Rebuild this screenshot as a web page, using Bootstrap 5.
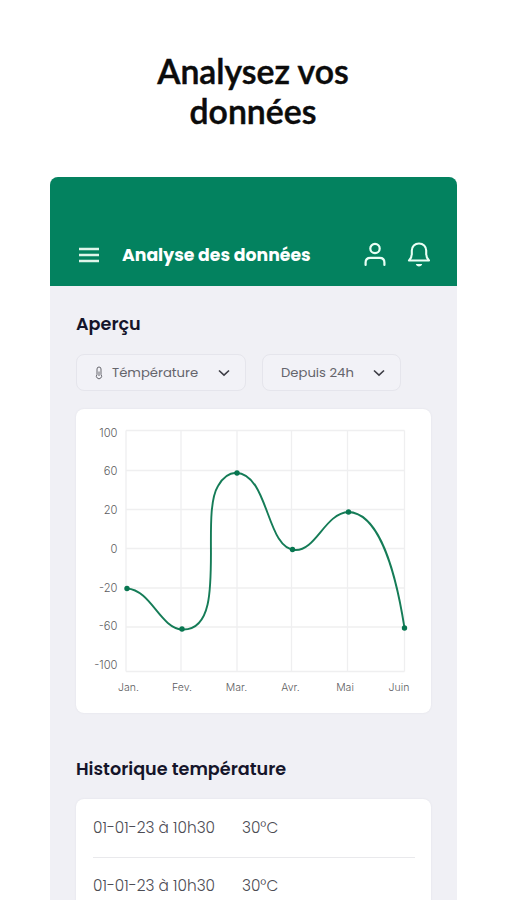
<!DOCTYPE html>
<html lang="fr">
<head>
<meta charset="utf-8">
<meta name="viewport" content="width=device-width, initial-scale=1">
<title>Analysez vos données</title>
<link href="https://cdn.jsdelivr.net/npm/bootstrap@5.3.0/dist/css/bootstrap.min.css" rel="stylesheet">
<style>
body{font-family:Poppins,Inter,"Liberation Sans",sans-serif;height:900px;overflow:hidden;background:#fff}
.headline{font:600 33.8px/40px Lato,sans-serif;-webkit-text-stroke:.5px #0b0b0b;color:#0b0b0b;height:177px;padding-top:51px}
.phone{width:407px;margin-left:50px;height:723px;background:#f0f0f5;border-radius:8px 8px 0 0;overflow:hidden}
.topbar{height:109px;background:#03825f;padding:0 24px 15px 28px}
.topbar-title{font-size:17.3px;line-height:32px;font-weight:700;margin-left:22px}
.content{padding:26px 26px 0}
.section-title{font-size:17.6px;line-height:24px;font-weight:600;color:#15152a}
.pickers{margin-top:18px}
.picker{height:37px;border:1px solid #e5e5ec;border-radius:8px;background:#f2f2f7;font-size:13.2px;color:#65656c}
.picker-a{width:170px;padding:0 15px 0 17px}
.picker-b{width:139px;padding:0 15px 0 18px}
.panel{border:0;border-radius:8px;box-shadow:0 0 2px #dedee6}
.chart-panel{margin-top:18px}
.chart{display:block}
.history-title{padding-top:44px}
.history{margin-top:18px;font-size:15.3px;font-weight:300;color:#4c4c54;padding:0 16px 0 17px;height:140px}
.entry{height:58px}
.entry+.entry{border-top:1px solid #e9e9ec}
.when{width:149px}
</style>
<script src="https://cdn.jsdelivr.net/npm/bootstrap@5.3.0/dist/js/bootstrap.bundle.min.js"></script>
</head>
<body>
<h1 class="headline text-center m-0">Analysez vos<br>données</h1>
<main class="phone">
  <header class="topbar d-flex align-items-end text-white">
    <svg class="mb-2" width="22" height="16" viewBox="0 0 22 16" fill="none" stroke="#dff5ea" stroke-width="2.3"><path d="M1 2h20M1 8h20M1 14h20"/></svg>
    <span class="topbar-title">Analyse des données</span>
    <div class="d-flex ms-auto gap-3">
      <svg width="28" height="32" viewBox="0 0 28 32" fill="none" stroke="#e9fff5" stroke-width="2.2" stroke-linecap="round"><circle cx="14" cy="9.500" r="4.700"/><path d="M4.600 26v-2.500c0-3 1.700-4.700 4.700-4.700h9.400c3 0 4.700 1.700 4.700 4.700V26"/></svg>
      <svg width="28" height="32" viewBox="0 0 28 32" fill="none" stroke="#e9fff5" stroke-width="2.1" stroke-linecap="round" stroke-linejoin="round"><path d="M4 21.500h20c-2-2-2.800-3.500-2.800-6.500v-3.500c0-4.200-3-7-7.200-7s-7.200 2.800-7.200 7V15c0 3-.8 4.500-2.800 6.500z"/><path d="M11.500 25.500c1 2 4 2 5 0z" fill="#e9fff5" stroke-width="1.200"/></svg>
    </div>
  </header>
  <div class="content">
    <h2 class="section-title mb-0">Aperçu</h2>
    <div class="d-flex gap-3 pickers">
      <div class="picker picker-a d-flex align-items-center">
        <svg width="10" height="16" viewBox="0 0 10 16" fill="none" stroke="#66666d" stroke-width="1"><path d="M3 9.500V4a2 2 0 0 1 4 0v5.500a2.600 2.600 0 1 1-4 0zM5 6.500V11"/></svg>
        <span class="ms-2">Témpérature</span>
        <svg class="ms-auto" width="12" height="8" viewBox="0 0 12 8" fill="none" stroke="#3d3d45" stroke-width="1.600"><path d="M1 1.500l5 4.700 5-4.700"/></svg>
      </div>
      <div class="picker picker-b d-flex align-items-center">
        <span>Depuis 24h</span>
        <svg class="ms-auto" width="12" height="8" viewBox="0 0 12 8" fill="none" stroke="#3d3d45" stroke-width="1.600"><path d="M1 1.500l5 4.700 5-4.700"/></svg>
      </div>
    </div>
    <section class="card panel chart-panel">
      <svg class="chart" width="355" height="304" viewBox="76 409 355 304">
        <path fill="none" stroke="#efeff0" stroke-width="1.300" d="M126 430.500h278.500M126 470.500h278.500M126 509.500h278.500M126 548.500h278.500M126 588h278.500M126 627h278.500M126 671.500h278.500M126 430.500v241M181 430.500v241M237 430.500v241M291.500 430.500v241M347.500 430.500v241M404.500 430.500v241"/>
        <path fill="none" stroke="#157c57" stroke-width="1.900" d="M127 588.500C151 590 160 628 182 629.500C230 632 199 517 218 486C223 477 228 473 236 472.700C269 474 266 549 295 550C316 551 325 513 348.500 512C376 513 394 561 404.500 628"/>
        <g fill="#087650"><circle cx="127" cy="588.500" r="2.700"/><circle cx="182" cy="629" r="2.700"/><circle cx="237" cy="473" r="2.700"/><circle cx="292.500" cy="549.500" r="2.700"/><circle cx="348.500" cy="512" r="2.700"/><circle cx="404.500" cy="628" r="2.700"/></g>
        <g font-family="Inter, sans-serif" font-size="11.200" font-weight="300" fill="#5c5c60" text-anchor="end">
          <text x="117.500" y="436.500">100</text><text x="117.500" y="475">60</text><text x="117.500" y="513.500">20</text><text x="117.500" y="552.500">0</text><text x="117.500" y="591.500">-20</text><text x="117.500" y="630">-60</text><text x="117.500" y="669">-100</text>
        </g>
        <g font-family="Inter, sans-serif" font-size="10.500" font-weight="300" fill="#5c5c60" text-anchor="middle">
          <text x="128.500" y="691">Jan.</text><text x="182" y="691">Fev.</text><text x="236.500" y="691">Mar.</text><text x="290.500" y="691">Avr.</text><text x="345" y="691">Mai</text><text x="399" y="691">Juin</text>
        </g>
      </svg>
    </section>
    <h2 class="section-title mb-0 history-title">Historique température</h2>
    <section class="card panel history">
      <div class="entry d-flex align-items-center"><span class="when">01-01-23 à 10h30</span><span>30°C</span></div>
      <div class="entry d-flex align-items-center"><span class="when">01-01-23 à 10h30</span><span>30°C</span></div>
    </section>
  </div>
</main>
</body>
</html>
